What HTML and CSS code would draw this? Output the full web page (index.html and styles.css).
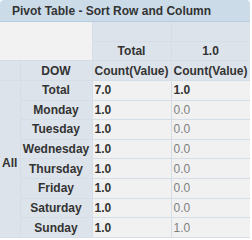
FILE: index.html
```html
<!DOCTYPE html>
<html>
<head>
<meta charset="utf-8">
<link rel="stylesheet" href="styles.css">
</head>
<body>
<div class="panel">
  <div class="title">Pivot Table - Sort Row and Column</div>
  <table class="pivot">
    <colgroup>
      <col class="c1"><col class="c2"><col class="c3"><col class="c4">
    </colgroup>
    <tr>
      <td class="corner" colspan="2" rowspan="2"></td>
      <th class="colhead"></th>
      <th class="colhead"></th>
    </tr>
    <tr>
      <th class="colhead center">Total</th>
      <th class="colhead center">1.0</th>
    </tr>
    <tr>
      <th class="rowhead"></th>
      <th class="rowhead center">DOW</th>
      <th class="colhead center">Count(Value)</th>
      <th class="colhead center">Count(Value)</th>
    </tr>
    <tr>
      <th class="rowhead all" rowspan="8">All</th>
      <th class="rowhead center">Total</th>
      <td class="val total">7.0</td>
      <td class="val total">1.0</td>
    </tr>
    <tr><th class="rowhead center">Monday</th><td class="val total">1.0</td><td class="val">0.0</td></tr>
    <tr><th class="rowhead center">Tuesday</th><td class="val total">1.0</td><td class="val">0.0</td></tr>
    <tr><th class="rowhead center">Wednesday</th><td class="val total">1.0</td><td class="val">0.0</td></tr>
    <tr><th class="rowhead center">Thursday</th><td class="val total">1.0</td><td class="val">0.0</td></tr>
    <tr><th class="rowhead center">Friday</th><td class="val total">1.0</td><td class="val">0.0</td></tr>
    <tr><th class="rowhead center">Saturday</th><td class="val total">1.0</td><td class="val">0.0</td></tr>
    <tr><th class="rowhead center">Sunday</th><td class="val total">1.0</td><td class="val">1.0</td></tr>
  </table>
</div>
</body>
</html>
```

FILE: styles.css
```css
html, body {
  margin: 0;
  padding: 0;
  background: #ffffff;
}
body {
  font-family: "Liberation Sans", Arial, sans-serif;
  font-size: 12px;
  color: #333333;
}
.panel {
  width: 250px;
  overflow: hidden;
  border-radius: 4px 4px 0 0;
}
.title {
  height: 21px;
  line-height: 22px;
  padding-left: 12px;
  background: #ccdbe8;
  border-bottom: 1px solid #b9cde0;
  font-weight: bold;
  color: #333333;
  white-space: nowrap;
}
.pivot {
  border-collapse: collapse;
  table-layout: fixed;
  width: 250px;
}
.c1 { width: 20px; }
.c2 { width: 72px; }
.c3 { width: 79px; }
.c4 { width: 79px; }
.pivot th, .pivot td {
  height: 18.64px;
  padding: 0 2px;
  border: 1px solid #d5dde6;
  white-space: nowrap;
  line-height: 18px;
  font-weight: bold;
  text-align: left;
  overflow: hidden;
}
.pivot tr:first-child th,
.pivot tr:first-child td {
  border-top: none;
}
.corner {
  background: #f2f2f2;
  border-left: none !important;
}
.colhead {
  background: #dde3ea;
}
.rowhead {
  background: #dde3ea;
}
.center {
  text-align: center !important;
}
.all {
  padding: 8px 0 0 2px !important;
  vertical-align: middle;
  border-left: none !important;
}
.pivot tr > th:first-child { border-left: none; }
.val {
  background: #f1f1f1;
  font-weight: normal !important;
  color: #808080;
}
.val.total {
  font-weight: bold !important;
  color: #333333;
}
```
